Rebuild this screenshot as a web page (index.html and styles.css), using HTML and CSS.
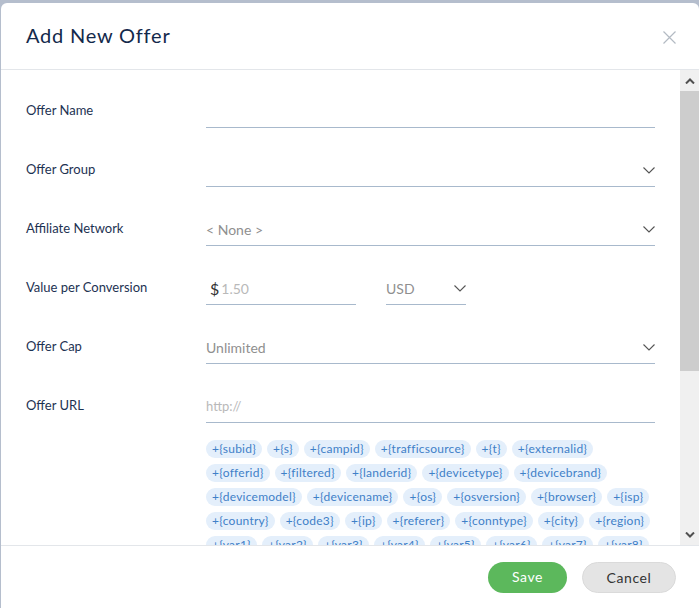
FILE: index.html
```html
<!DOCTYPE html>
<html lang="en">
<head>
<meta charset="utf-8">
<title>Add New Offer</title>
<link rel="stylesheet" href="styles.css">
</head>
<body>
<div class="backdrop">
  <div class="modal">
    <div class="modal-header">
      <h2 class="modal-title">Add New Offer</h2>
      <button class="close" aria-label="Close">
        <svg width="13" height="13" viewBox="0 0 13 13"><path d="M0.5 0.5 L12.5 12.5 M12.5 0.5 L0.5 12.5" stroke="#b3bac3" stroke-width="1.2" fill="none"/></svg>
      </button>
    </div>
    <div class="modal-main">
      <div class="modal-body">
        <div class="form-row">
          <label class="form-label">Offer Name</label>
          <div class="field"></div>
        </div>
        <div class="form-row">
          <label class="form-label">Offer Group</label>
          <div class="field select">
            <span class="value"></span>
            <svg class="chev" width="12" height="7" viewBox="0 0 12 7"><path d="M0.5 0.5 L6 6 L11.5 0.5" stroke="#555" stroke-width="1.1" fill="none"/></svg>
          </div>
        </div>
        <div class="form-row">
          <label class="form-label">Affiliate Network</label>
          <div class="field select">
            <span class="value muted">&lt; None &gt;</span>
            <svg class="chev" width="12" height="7" viewBox="0 0 12 7"><path d="M0.5 0.5 L6 6 L11.5 0.5" stroke="#555" stroke-width="1.1" fill="none"/></svg>
          </div>
        </div>
        <div class="form-row">
          <label class="form-label">Value per Conversion</label>
          <div class="field money">
            <span class="dollar">$</span><span class="value faint">1.50</span>
          </div>
          <div class="field select currency">
            <span class="value muted">USD</span>
            <svg class="chev" width="12" height="7" viewBox="0 0 12 7"><path d="M0.5 0.5 L6 6 L11.5 0.5" stroke="#555" stroke-width="1.1" fill="none"/></svg>
          </div>
        </div>
        <div class="form-row">
          <label class="form-label">Offer Cap</label>
          <div class="field select">
            <span class="value muted">Unlimited</span>
            <svg class="chev" width="12" height="7" viewBox="0 0 12 7"><path d="M0.5 0.5 L6 6 L11.5 0.5" stroke="#555" stroke-width="1.1" fill="none"/></svg>
          </div>
        </div>
        <div class="form-row url-row">
          <label class="form-label">Offer URL</label>
          <div class="field">
            <span class="value faint small">http://</span>
          </div>
        </div>
        <div class="tags">
          <div class="tag-row">
            <span class="tag">+{subid}</span><span class="tag">+{s}</span><span class="tag">+{campid}</span><span class="tag">+{trafficsource}</span><span class="tag">+{t}</span><span class="tag">+{externalid}</span>
          </div>
          <div class="tag-row">
            <span class="tag">+{offerid}</span><span class="tag">+{filtered}</span><span class="tag">+{landerid}</span><span class="tag">+{devicetype}</span><span class="tag">+{devicebrand}</span>
          </div>
          <div class="tag-row">
            <span class="tag">+{devicemodel}</span><span class="tag">+{devicename}</span><span class="tag">+{os}</span><span class="tag">+{osversion}</span><span class="tag">+{browser}</span><span class="tag">+{isp}</span>
          </div>
          <div class="tag-row">
            <span class="tag">+{country}</span><span class="tag">+{code3}</span><span class="tag">+{ip}</span><span class="tag">+{referer}</span><span class="tag">+{conntype}</span><span class="tag">+{city}</span><span class="tag">+{region}</span>
          </div>
          <div class="tag-row">
            <span class="tag">+{var1}</span><span class="tag">+{var2}</span><span class="tag">+{var3}</span><span class="tag">+{var4}</span><span class="tag">+{var5}</span><span class="tag">+{var6}</span><span class="tag">+{var7}</span><span class="tag">+{var8}</span>
          </div>
        </div>
      </div>
      <div class="scrollbar">
        <div class="sb-btn">
          <svg width="10" height="6" viewBox="0 0 10 6"><path d="M1 5.5 L5 1.5 L9 5.5" stroke="#505050" stroke-width="2" fill="none"/></svg>
        </div>
        <div class="sb-track"><div class="sb-thumb"></div></div>
        <div class="sb-btn">
          <svg width="10" height="6" viewBox="0 0 10 6"><path d="M1 0.5 L5 4.5 L9 0.5" stroke="#505050" stroke-width="2" fill="none"/></svg>
        </div>
      </div>
    </div>
    <div class="modal-footer">
      <button class="btn btn-save">Save</button>
      <button class="btn btn-cancel">Cancel</button>
    </div>
  </div>
</div>
</body>
</html>
```
FILE: styles.css
```css
* { box-sizing: border-box; }
html, body { margin: 0; padding: 0; }
body {
  width: 699px;
  height: 608px;
  overflow: hidden;
  background: #b5becd;
  font-family: "Lato", "Open Sans", sans-serif;
}
.backdrop {
  padding: 3px 0 0 1px;
  height: 608px;
}
.modal {
  background: #fff;
  border-radius: 6px 6px 0 0;
  height: 605px;
  display: flex;
  flex-direction: column;
  overflow: hidden;
}
.modal-header {
  height: 67px;
  flex: none;
  border-bottom: 1px solid #e3e6ea;
  display: flex;
  align-items: center;
  justify-content: space-between;
  padding: 0 23px 0 25px;
}
.modal-title {
  margin: 0;
  font-size: 20px;
  font-weight: 400;
  color: #13294b;
  letter-spacing: 0.8px;
  padding-bottom: 2px;
}
.close {
  border: 0;
  background: none;
  padding: 0;
  width: 13px;
  height: 13px;
  display: flex;
  margin-top: 2px;
}
.modal-main {
  height: 475px;
  flex: none;
  display: flex;
}
.modal-body {
  flex: 1;
  overflow: hidden;
  padding: 25px 25px 0 25px;
}
.form-row {
  display: flex;
  height: 33px;
  margin-bottom: 26px;
}
.form-row.url-row { margin-bottom: 17px; }
.form-label {
  width: 180px;
  flex: none;
  display: flex;
  align-items: center;
  padding-bottom: 3px;
  font-size: 13px;
  color: #1d3252;
}
.field {
  flex: 1;
  border-bottom: 1px solid #a8b9cc;
  display: flex;
  align-items: center;
  justify-content: space-between;
}
.value { font-size: 14px; }
.value.small { font-size: 13px; }
.muted { color: #8f8f8f; }
.faint { color: #b9b9b9; }
.chev { flex: none; margin-top: 1px; }
.field.money {
  flex: none;
  width: 150px;
  justify-content: flex-start;
  padding-left: 4px;
}
.dollar {
  font-size: 16px;
  color: #333;
  margin-right: 2px;
}
.field.currency {
  flex: none;
  width: 80px;
  margin-left: 30px;
}
.tags {
  display: flex;
  flex-direction: column;
  gap: 6px;
  padding-left: 180px;
}
.tag-row {
  display: flex;
  gap: 5px;
}
.tag {
  height: 18px;
  line-height: 18px;
  padding: 0 6px;
  border-radius: 9px;
  background: #e4effb;
  color: #3f80c8;
  font-size: 12px;
  letter-spacing: 0.25px;
  white-space: nowrap;
}
.scrollbar {
  width: 19px;
  flex: none;
  background: #f0f0f0;
  display: flex;
  flex-direction: column;
}
.sb-btn {
  height: 21px;
  flex: none;
  display: flex;
  align-items: center;
  justify-content: center;
}
.sb-track { flex: 1; }
.sb-thumb {
  height: 280px;
  background: #cdcdcd;
}
.modal-footer {
  flex: 1;
  border-top: 1px solid #e3e6ea;
  display: flex;
  justify-content: flex-end;
  align-items: flex-start;
  gap: 15px;
  padding: 16px 23px 0 0;
}
.btn {
  height: 31px;
  border: 0;
  border-radius: 16px;
  font-family: "Lato", "Open Sans", sans-serif;
  font-size: 14px;
  line-height: 29px;
  padding: 0 0 2px;
  letter-spacing: 0.6px;
  cursor: pointer;
}
.btn-save {
  width: 79px;
  background: #5cb85c;
  color: #fff;
}
.btn-cancel {
  width: 94px;
  background: #e4e4e4;
  color: #333;
  border: 1px solid #dadada;
}
```
